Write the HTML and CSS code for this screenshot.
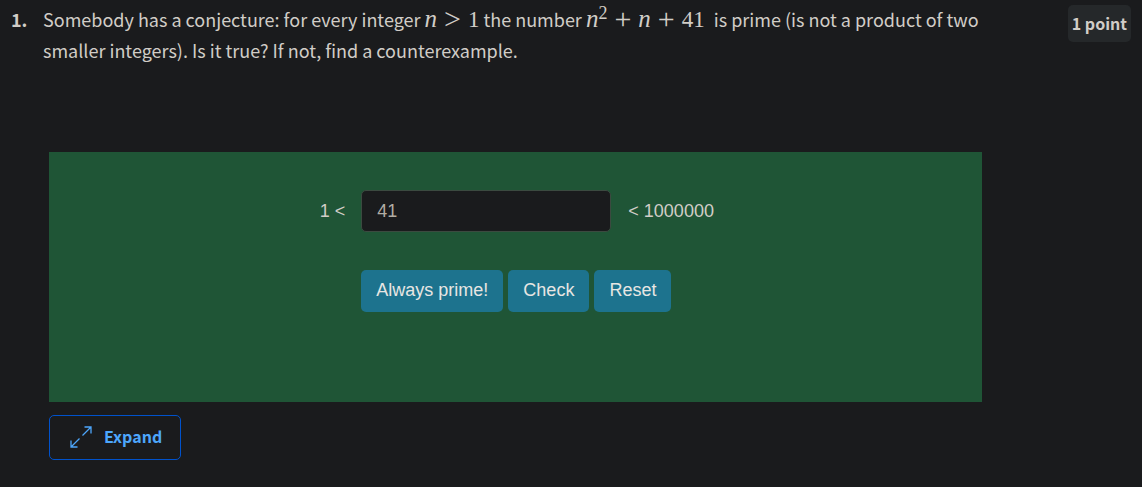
FILE: index.html
```html
<!DOCTYPE html>
<html lang="en">
<head>
<meta charset="utf-8">
<title>Puzzle: prime conjecture</title>
<link rel="stylesheet" href="styles.css">
</head>
<body>
<main class="question">
  <span class="number">1.</span>
  <div class="content">
    <p class="prompt">Somebody has a conjecture: for every integer <span class="math"><i>n</i><span class="op">&gt;</span>1</span> the number <span class="math wide"><i>n</i><sup>2</sup><span class="op">+</span><i>n</i><span class="op">+</span>41</span> is prime (is not a product of two smaller integers). Is it true? If not, find a counterexample.</p>
    <form class="puzzle">
      <label class="lower" for="answer">1 &lt;</label>
      <input class="answer" id="answer" type="text" value="41">
      <span class="upper">&lt; 1000000</span>
      <div class="actions">
        <button class="action" type="button">Always prime!</button>
        <button class="action" type="button">Check</button>
        <button class="action" type="reset">Reset</button>
      </div>
    </form>
    <button class="expand" type="button">
      <svg class="expand-icon" viewBox="0 0 22 22" width="22" height="22" aria-hidden="true">
        <path d="M12.500 9.500 21 1M14.500 1H21V7.500M9.500 12.500 1 21M1 14.500V21H7.500"/>
      </svg>
      Expand
    </button>
  </div>
  <span class="points">1 point</span>
</main>
</body>
</html>
```
FILE: styles.css
```css
* {
  box-sizing: border-box;
}

body {
  margin: 0;
  min-height: 100vh;
  background: #1a1b1d;
  color: #d1cdc7;
  font-family: "Source Sans Pro", "Noto Sans CJK SC", sans-serif;
  font-size: 18px;
  line-height: 31px;
}

.question {
  display: grid;
  grid-template-columns: 32px minmax(0, 1fr) auto;
  align-items: start;
  padding: 4px 11px 0 11px;
}

.number {
  font-weight: 700;
}

.content {
  padding-right: 86px;
}

.prompt {
  margin: 0 0 86px;
}

.math {
  font-family: "Liberation Serif", serif;
  font-size: 23px;
  line-height: 1;
  white-space: nowrap;
}

.math i {
  font-size: 25px;
  line-height: 0;
}

.wide {
  margin-right: 5px;
}

.math sup {
  font-size: 18px;
  line-height: 0;
  vertical-align: 8px;
}

.op {
  margin: 0 7px;
  font-size: 30px;
  line-height: 0;
  vertical-align: -2px;
}

.puzzle {
  display: grid;
  grid-template-columns: minmax(0, 312fr) 250px minmax(0, 370fr);
  align-items: center;
  row-gap: 38px;
  margin: 0 0 13px 6px;
  padding: 38px 0 90px;
  background: #1f5536;
  font-family: "Liberation Sans", sans-serif;
  font-size: 18px;
  line-height: 24px;
}

.lower {
  padding-right: 16px;
  text-align: right;
}

.answer {
  width: 100%;
  height: 42px;
  padding: 0 15px;
  border: 1px solid #3b4a40;
  border-radius: 5px;
  background: #1a1b1d;
  color: #b2ada4;
  font: inherit;
}

.upper {
  padding-left: 17px;
}

.actions {
  grid-column: 2 / -1;
  display: flex;
  gap: 5px;
}

.action {
  height: 42px;
  padding: 0 15px 2px;
  border: 0;
  border-radius: 5px;
  background: #1d738e;
  color: #e8e6e3;
  font: inherit;
}

.expand {
  display: flex;
  align-items: center;
  gap: 12px;
  height: 45px;
  margin-left: 6px;
  padding: 0 18px 2px 20px;
  border: 1px solid #0052cc;
  border-radius: 5px;
  background: transparent;
  color: #4da6fb;
  font: inherit;
  font-size: 16px;
  font-weight: 700;
}

.expand-icon {
  fill: none;
  stroke: currentColor;
  stroke-width: 1.3;
}

.points {
  margin-top: 1px;
  padding: 3px 4px;
  border-radius: 5px;
  background: #25282a;
  font-size: 16px;
  font-weight: 700;
}
```
